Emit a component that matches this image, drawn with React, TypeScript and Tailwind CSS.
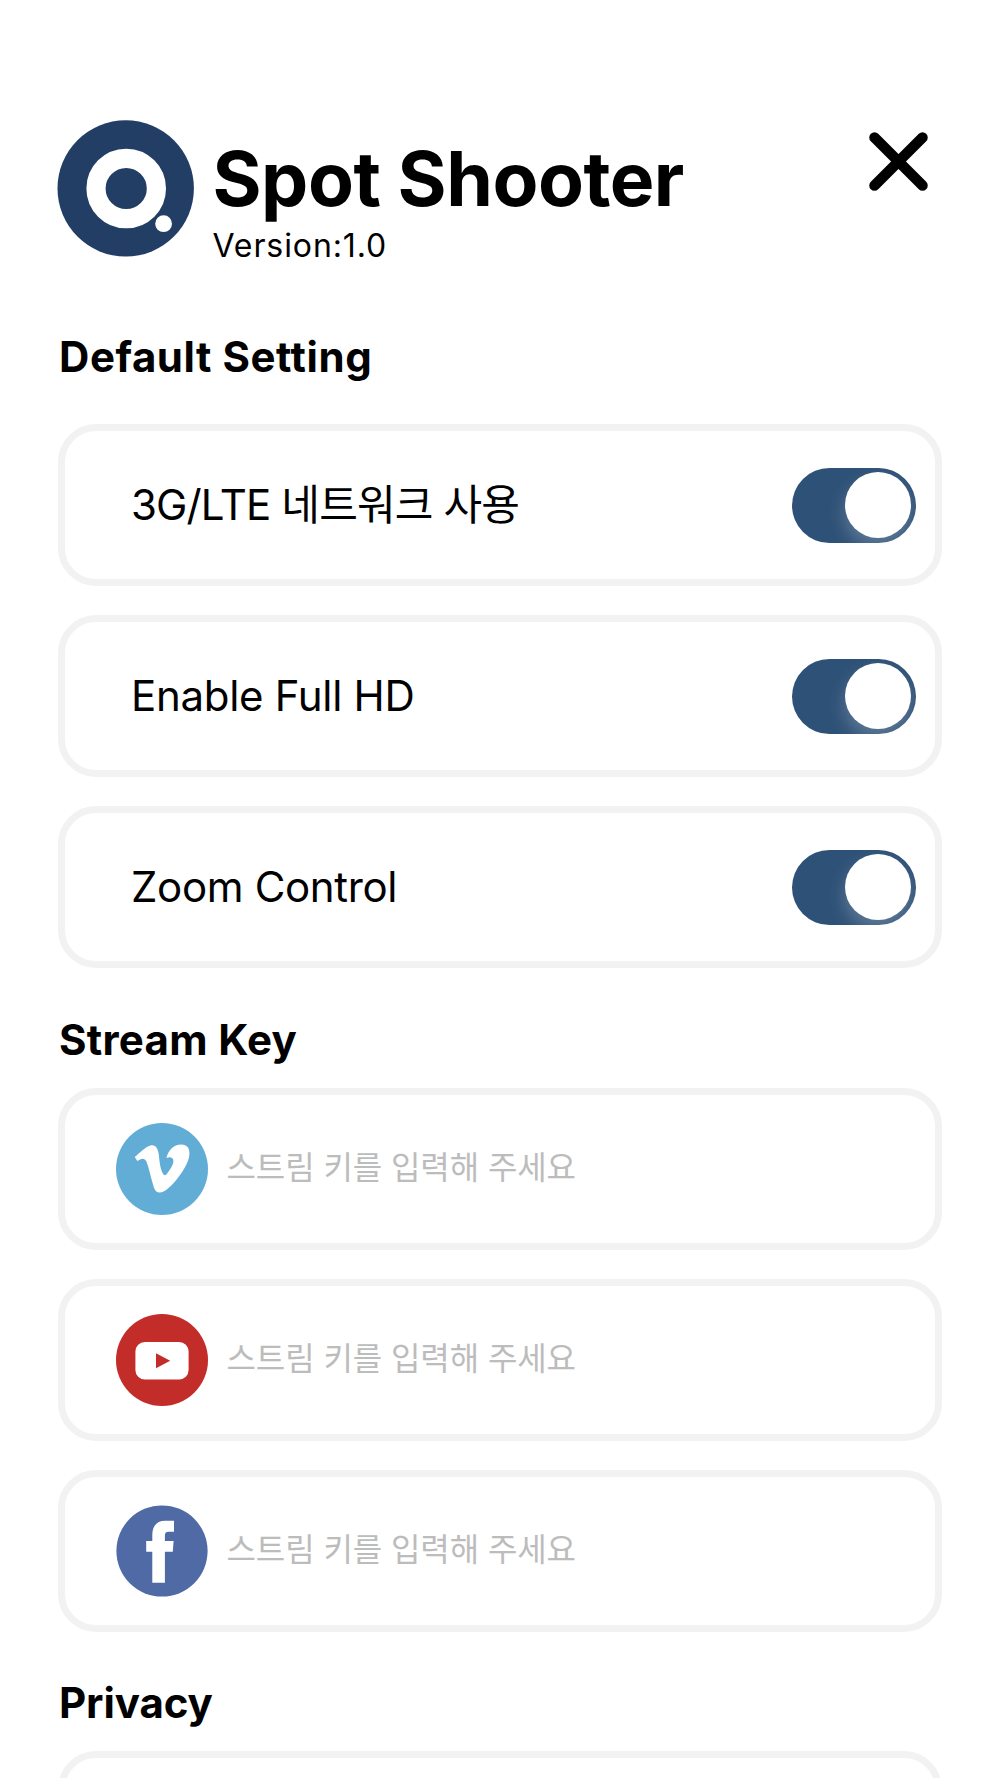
import { useState } from "react";
import type { ReactNode } from "react";

const Logo = () => (
  <svg className="w-[137px] h-[137px] shrink-0" viewBox="0 0 137 137">
    <circle cx="68.7" cy="68.4" r="68.2" fill="#233e64" />
    <circle cx="69.2" cy="68.5" r="30.2" fill="none" stroke="#fff" strokeWidth="19.2" />
    <circle cx="106.6" cy="103.7" r="8.4" fill="#fff" />
  </svg>
);

const VimeoIcon = () => (
  <svg className="w-[92px] h-[92px]" viewBox="0 0 92 92">
    <circle cx="46" cy="46" r="46" fill="#62add6" />
    <path
      fill="#fff"
      d="M18.7 34C24 29.5 29 24 34.5 22.4C40 21.4 42 26 42.7 31C43.6 38 44 46 47.2 51C48.5 52.9 49.8 52.3 51 50.8C53.5 47.5 57.2 42 57.4 38.6C57.5 34.4 54.2 33.6 50.4 35C52.6 27 57.5 21.6 65.2 21.6C71.5 21.7 73.8 25.8 73.4 31.5C72.8 40 66 49.5 61 56C56.5 61.5 49.5 69.6 43.5 69.6C38.5 69.5 37.5 63 36.3 59C34.3 52.2 32.8 44.5 30.4 38.6C28.4 34 24.5 35.9 21.4 38Z"
    />
  </svg>
);

const YoutubeIcon = () => (
  <svg className="w-[92px] h-[92px]" viewBox="0 0 92 92">
    <circle cx="46" cy="46" r="46" fill="#c22c29" />
    <rect x="19.4" y="28" width="53.2" height="37.6" rx="9.5" fill="#fff" />
    <path d="M40 39.2L54.2 46.7L40 54.2Z" fill="#c22c29" />
  </svg>
);

const FacebookIcon = () => (
  <svg className="w-[92px] h-[92px]" viewBox="0 0 92 92">
    <circle cx="46" cy="46" r="45.6" fill="#4f6aa5" />
    <path
      fill="#fff"
      d="M36.3 77.8V46.7H30.2V36H36.3V30C36.3 21 41 15.7 49 15.7H58V26.7H52.5C49.8 26.7 48.9 28.2 48.9 30.5V36H57.6L56.8 46.7H48.9V77.8Z"
    />
  </svg>
);

const Card = ({ children }: { children?: ReactNode }) => (
  <div className="flex items-center h-[162px] rounded-[38px] border-[7px] border-[#f2f2f2] bg-white">
    {children}
  </div>
);

const SectionTitle = ({ className, children }: { className: string; children: ReactNode }) => (
  <h2 className={`text-[42px] leading-[50px] font-bold ${className}`}>{children}</h2>
);

const Toggle = ({ label }: { label: string }) => {
  const [on, setOn] = useState(true);

  return (
    <button
      role="switch"
      aria-checked={on}
      aria-label={label}
      onClick={() => setOn(!on)}
      className={`flex items-center w-[124px] h-[75px] px-[5px] rounded-full overflow-hidden ${
        on ? "justify-end bg-[#2e5177]" : "justify-start bg-gray-300"
      }`}
    >
      <span className="w-[66px] h-[66px] rounded-full bg-white shadow-[0_9px_18px_rgba(255,255,255,0.24)]" />
    </button>
  );
};

const settings = [
  { label: "3G/LTE 네트워크 사용", tracking: "tracking-[-0.85px]" },
  { label: "Enable Full HD", tracking: "tracking-[-0.3px]" },
  { label: "Zoom Control", tracking: "tracking-[-0.35px]" },
];

const streams = [
  { name: "vimeo", icon: <VimeoIcon /> },
  { name: "youtube", icon: <YoutubeIcon /> },
  { name: "facebook", icon: <FacebookIcon /> },
];

const App = () => {
  return (
    <main className="w-[1000px] h-[1778px] overflow-hidden bg-white px-[58px] pt-[120px] text-black font-['Inter','Noto_Sans_CJK_KR',sans-serif]">
      {/* App branding */}
      <header className="flex items-start h-[212px] -ml-px">
        <Logo />
        <div className="pt-[19px] pl-[18.5px]">
          <h1 className="text-[75px] leading-[80px] font-bold tracking-[-0.5px] whitespace-nowrap">
            Spot Shooter
          </h1>
          <p className="mt-[11px] text-[32px] leading-[32px] tracking-[0.9px]">Version:1.0</p>
        </div>
        <button className="ml-auto mt-3 mr-[14px]" aria-label="Close">
          <svg className="w-[59px] h-[59px]" viewBox="0 0 59 59" stroke="#000" strokeWidth="10.5" strokeLinecap="round">
            <path d="M5.5 5.5L53.5 53.5M53.5 5.5L5.5 53.5" />
          </svg>
        </button>
      </header>

      {/* Default settings */}
      <section>
        <SectionTitle className="pl-px tracking-[0.55px]">Default Setting</SectionTitle>
        <div className="flex flex-col gap-[29px] mt-[42px]">
          {settings.map(({ label, tracking }) => (
            <Card key={label}>
              <div className="flex items-center justify-between w-full pl-[66px] pr-[19px]">
                <span className={`text-[42px] leading-[50px] ${tracking}`}>{label}</span>
                <Toggle label={label} />
              </div>
            </Card>
          ))}
        </div>
      </section>

      {/* Stream keys */}
      <section className="mt-[47px]">
        <SectionTitle className="pl-px tracking-[0.3px]">Stream Key</SectionTitle>
        <div className="flex flex-col gap-[29px] mt-[23px]">
          {streams.map(({ name, icon }) => (
            <Card key={name}>
              <div className="flex items-center pl-[51px]">
                {icon}
                <span className="pl-[18.5px] pb-0.5 text-[32px] leading-[40px] font-normal tracking-[-0.1px] text-[#bcbcbc]">
                  스트림 키를 입력해 주세요
                </span>
              </div>
            </Card>
          ))}
        </div>
      </section>

      {/* Privacy */}
      <section className="mt-[46px]">
        <SectionTitle className="pl-px tracking-[-0.1px]">Privacy</SectionTitle>
        <div className="mt-[23px]">
          <Card />
        </div>
      </section>
    </main>
  );
};

export default App;
